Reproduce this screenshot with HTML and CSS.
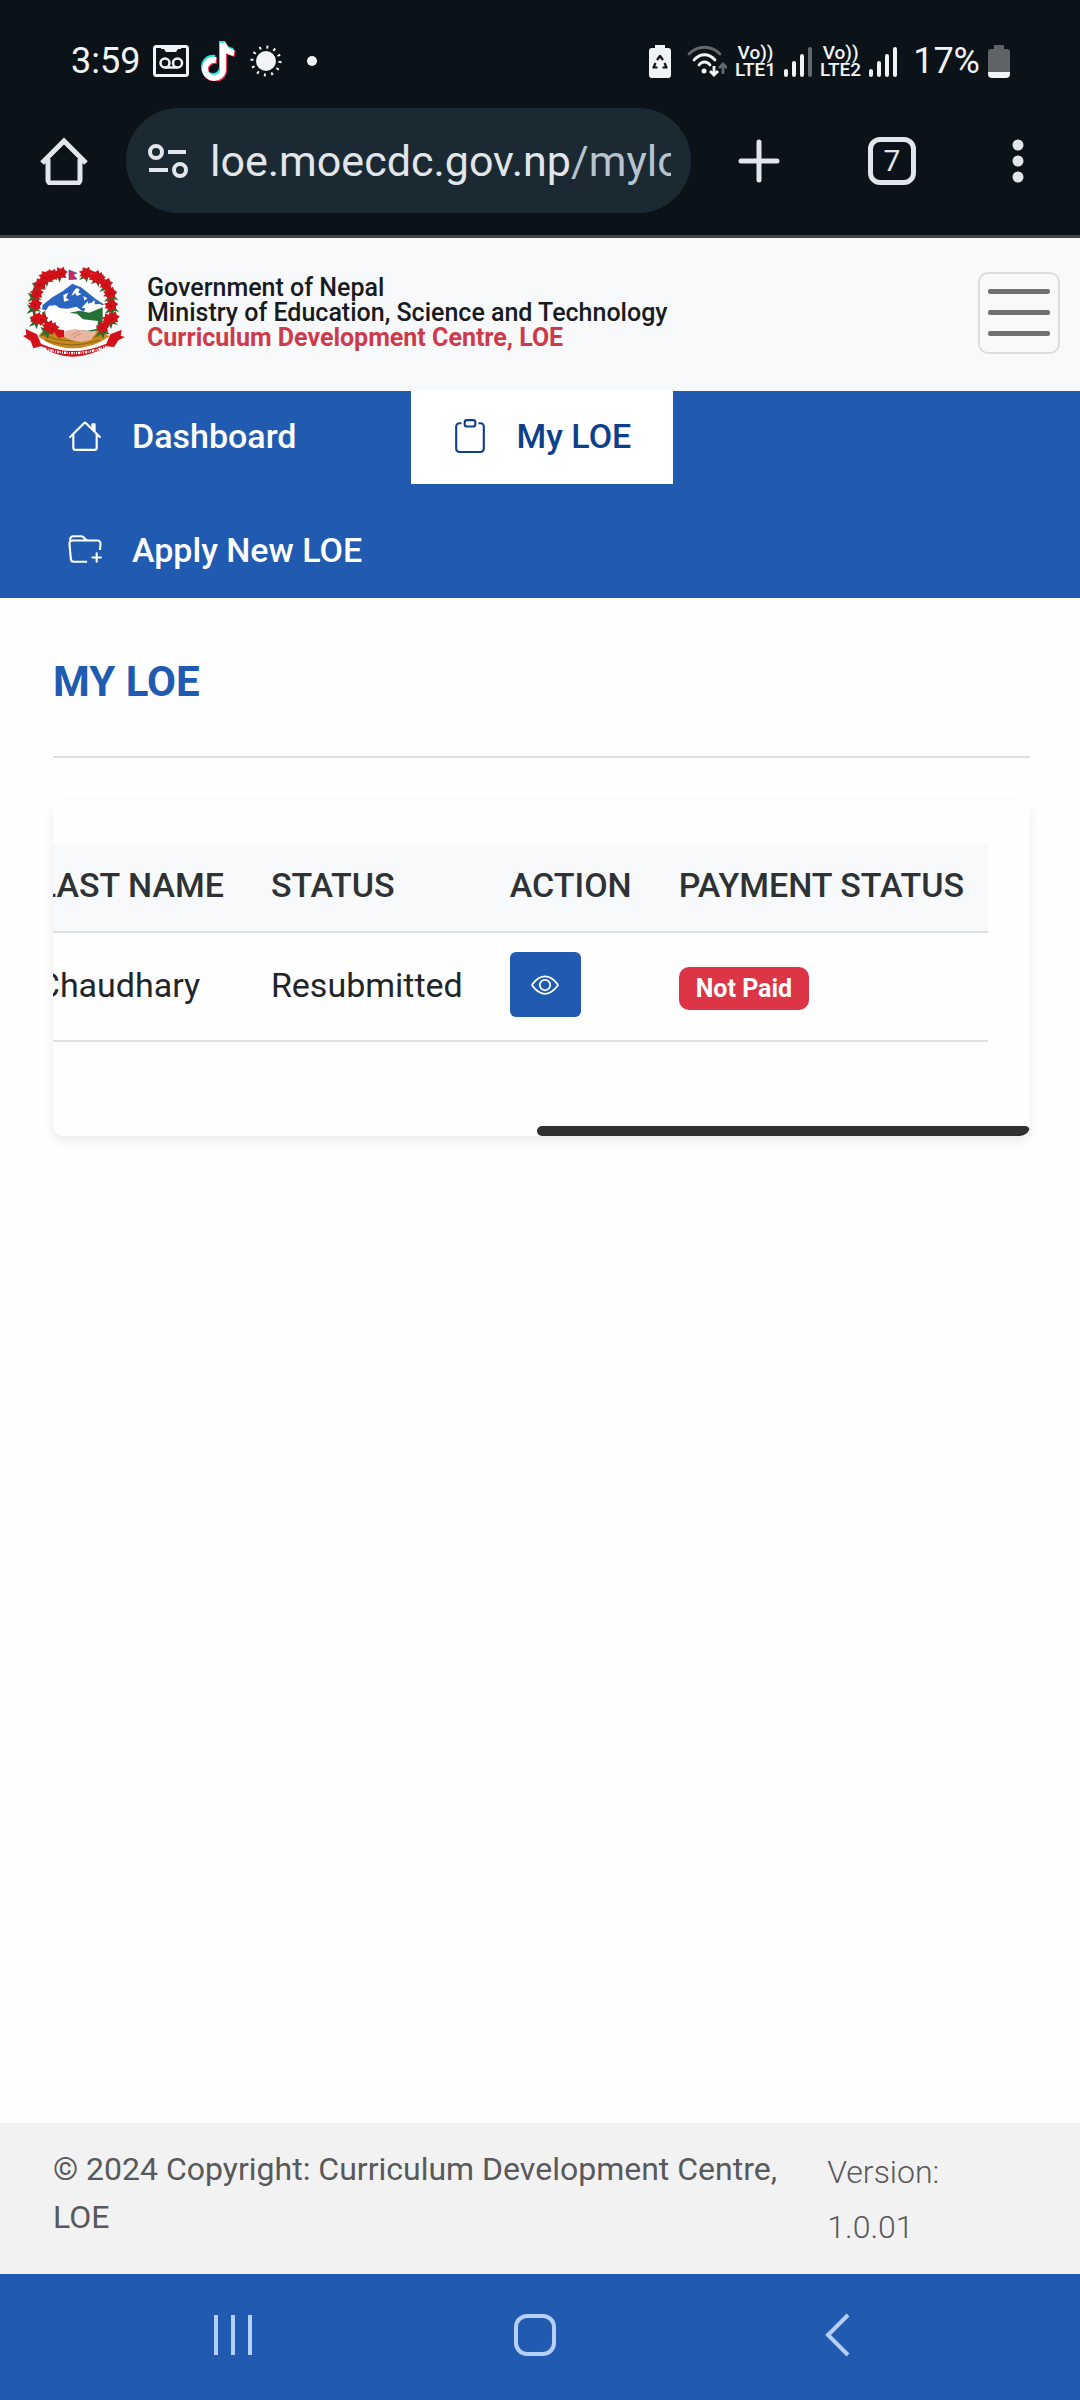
FILE: index.html
```
<!DOCTYPE html>
<html lang="en">
<head>
<meta charset="utf-8">
<meta name="viewport" content="width=device-width, initial-scale=1">
<title>My LOE</title>
<link rel="stylesheet" href="styles.css">
</head>
<body>
<div class="system">
  <div class="status">
    <div class="status-group">
      <span class="clock">3:59</span>
      <svg class="cassette" width="36" height="32" viewBox="0 0 36 32"><rect x="1.500" y="1.500" width="33" height="29" rx="2" fill="none" stroke="#f1f3f4" stroke-width="3"/><path d="M8 1h20v3h-3l-2 3H13l-2-3H8z" fill="#f1f3f4"/><g fill="none" stroke="#f1f3f4" stroke-width="2.500"><circle cx="12" cy="18" r="4.500"/><circle cx="24.500" cy="18" r="4.500"/><path d="M12 22.500h12"/></g></svg>
      <svg class="tiktok" width="36" height="40" viewBox="0 0 36 40"><g fill="none" stroke-width="6"><path d="M15 18C8 17 4 22 4 27c0 6 5 9 9 9s9-3 9-9V1c1 6 5 9 11 10" stroke="#25e4dc" transform="translate(-1 -1)"/><path d="M15 18C8 17 4 22 4 27c0 6 5 9 9 9s9-3 9-9V1c1 6 5 9 11 10" stroke="#f5305c" transform="translate(1 2)"/><path d="M15 18C8 17 4 22 4 27c0 6 5 9 9 9s9-3 9-9V1c1 6 5 9 11 10" stroke="#fff" transform="translate(0 1)"/></g></svg>
      <svg class="sun" width="32" height="32" viewBox="0 0 32 32"><circle cx="16" cy="16" r="10" fill="#f1f3f4"/><circle cx="16" cy="16" r="14" fill="none" stroke="#f1f3f4" stroke-width="3" stroke-dasharray="2 5.330"/></svg>
      <svg class="dot" width="10" height="10" viewBox="0 0 10 10"><circle cx="5" cy="5" r="5" fill="#f1f3f4"/></svg>
    </div>
    <div class="status-group status-right">
      <svg class="saver" width="22" height="33" viewBox="0 0 22 33"><path d="M6 0h10v3h3a3 3 0 0 1 3 3v24a3 3 0 0 1-3 3H3a3 3 0 0 1-3-3V6a3 3 0 0 1 3-3h3z" fill="#f1f3f4"/><path d="M8 15l3-4 3 4M15.500 18l2 4.500h-4M8.500 22.500h-4l2-4.500" fill="none" stroke="#0c1318" stroke-width="2.200" stroke-linejoin="round"/></svg>
      <svg width="40" height="32" viewBox="0 0 40 32"><g fill="none" stroke="#f1f3f4" stroke-width="2.800" stroke-linecap="round"><path d="M2 9C11 0 24 0 33 9" stroke="#62686c"/><path d="M7 15c6-7 15-7 21 0M12 20c3-4 8-4 11 0"/><path d="M27 21v9m-4-4 4 4 4-4" stroke-linecap="butt"/><path d="M36 29V19m-4 4 4-4 4 4" stroke="#62686c" stroke-linecap="butt"/></g><circle cx="17" cy="26" r="2.500" fill="#f1f3f4"/></svg>
      <span class="volte">Vo))<br>LTE1</span>
      <svg width="28" height="31" viewBox="0 0 28 31"><g stroke="#f1f3f4" stroke-width="4" stroke-linecap="round"><path d="M2 25v4M10 17v12M18 10v19"/><path d="M26 3v26" stroke="#62686c"/></g></svg>
      <span class="volte">Vo))<br>LTE2</span>
      <svg width="28" height="31" viewBox="0 0 28 31"><path d="M2 25v4M10 17v12M18 10v19M26 3v26" stroke="#f1f3f4" stroke-width="4" stroke-linecap="round"/></svg>
      <span class="percent">17%</span>
      <svg width="22" height="33" viewBox="0 0 22 33"><path d="M6 0h10v4h3a3 3 0 0 1 3 3v20H0V7a3 3 0 0 1 3-3h3z" fill="#5f6366"/><path d="M0 27h22v2a4 4 0 0 1-4 4H4a4 4 0 0 1-4-4z" fill="#f1f3f4"/></svg>
    </div>
  </div>
  <div class="browser">
    <button class="tool" aria-label="Home"><svg width="48" height="48" viewBox="0 0 48 48"><path d="M2 26 24 4l22 22M8 22v21a3 3 0 0 0 3 3h26a3 3 0 0 0 3-3V22" fill="none" stroke="#e2e6ea" stroke-width="5"/></svg></button>
    <button class="address" aria-label="Address">
      <svg width="40" height="34" viewBox="0 0 40 34"><g fill="none" stroke="#e2e6ea" stroke-width="4"><circle cx="8" cy="8" r="6"/><circle cx="32" cy="26" r="6"/><path d="M20 8h18M1 26h19"/></g></svg>
      <span class="url">loe.moecdc.gov.np<span class="path">/myloe</span></span>
    </button>
    <div class="tools">
      <button class="tool" aria-label="New tab"><svg width="42" height="44" viewBox="0 0 42 44"><path d="M21 3v38M3 22h36" stroke="#e2e6ea" stroke-width="5" stroke-linecap="round"/></svg></button>
      <button class="tool tabs" aria-label="Tabs">7</button>
      <button class="tool" aria-label="Menu"><svg width="12" height="44" viewBox="0 0 12 44"><g fill="#e2e6ea"><circle cx="6" cy="6" r="5.500"/><circle cx="6" cy="22" r="5.500"/><circle cx="6" cy="38" r="5.500"/></g></svg></button>
    </div>
  </div>
</div>

<header class="masthead">
  <svg class="emblem" width="120" height="105" viewBox="0 0 360 315">
    <defs>
      <g id="leaf"><path d="M-20-10l14 4 2-16 7 15 17-5-11 12 14 12-16-2-5 16-6-14-17 6 10-13z" fill="#2d6b2c"/></g>
      <g id="bloom"><path d="M-20-7l10-3 1-10 10 4 9-6 3 10 9 5-7 8 2 10-11-1-8 7-6-9-11-1 6-8z" fill="#d3111b"/><circle r="3" fill="#9e0c14"/></g>
    </defs>
    <ellipse cx="172" cy="162" rx="104" ry="118" fill="#fff"/>
    <path d="M83 135 112 112l33-20 27-21 16 7 9 3 22 17 24 20 26 16-28 2-18-8-18 28-20-16-28 6-26-2-28 10-22-6z" fill="#2a65c2"/>
    <path d="M184 84l10 4-4 10 10 4-14 6-5-8-12 8 7-14zM145 105l15-7-7 16 10 6-16 5zM205 108l12 7-9 7z" fill="#fff"/>
    <path d="M200 143l18-19 3 11 18-15 0 13 20-1-15 13-15-3-9 9-11-6z" fill="#fff"/>
    <path d="M82 157l20-10 34 3 22 10 35-8 30 6 40-16v40l-9 27-40 10-60-20-50 6-20-20z" fill="#247035"/>
    <path d="M90 155l12-18 20-1 12 8 20 14 32 3 18 17 45 5-2 23-29 6-66-5-52-13z" fill="#fff"/>
    <path d="M86 209q86 38 166 0l32 20q-50 36-110 36T70 229z" fill="#c58b20"/>
    <path d="M86 226q86 34 170 0M90 240q82 30 164 0" fill="none" stroke="#8c6111" stroke-width="3"/>
    <path d="M125 207l22 4 1 20-18 2-12-14z" fill="#d3111b"/>
    <path d="M148 213l30-5 36 4 30 5-15 22-30 7-30-5-21-10z" fill="#eab5a0"/>
    <path d="M170 225l24-12M175 232l24-12" stroke="#b77766" stroke-width="2"/>
    <g><use href="#leaf" x="132" y="42"/><use href="#leaf" x="94" y="55"/><use href="#leaf" x="70" y="78"/><use href="#leaf" x="58" y="108"/><use href="#leaf" x="56" y="143"/><use href="#leaf" x="63" y="182"/><use href="#leaf" x="96" y="211"/><use href="#leaf" x="213" y="42"/><use href="#leaf" x="248" y="55"/><use href="#leaf" x="274" y="78"/><use href="#leaf" x="288" y="108"/><use href="#leaf" x="290" y="143"/><use href="#leaf" x="286" y="182"/><use href="#leaf" x="262" y="211"/></g>
    <g><use href="#bloom" x="136" y="42"/><use href="#bloom" x="110" y="48"/><use href="#bloom" x="90" y="53"/><use href="#bloom" x="75" y="75"/><use href="#bloom" x="64" y="102"/><use href="#bloom" x="60" y="136"/><use href="#bloom" x="64" y="178"/><use href="#bloom" x="78" y="180"/><use href="#bloom" x="100" y="202"/><use href="#bloom" x="111" y="208"/><use href="#bloom" x="212" y="42"/><use href="#bloom" x="240" y="52"/><use href="#bloom" x="250" y="58"/><use href="#bloom" x="272" y="75"/><use href="#bloom" x="284" y="102"/><use href="#bloom" x="287" y="138"/><use href="#bloom" x="280" y="180"/><use href="#bloom" x="292" y="176"/><use href="#bloom" x="262" y="204"/></g>
    <path d="M162 30l24 10-12 3 12 14-24 2z" fill="#d3255a" stroke="#3549a0" stroke-width="2"/>
    <path d="M24 228l10-4-2-17 34 16 12 28q94 44 196 0l12-28 34-14-3 18 13 4-20 10-13 20-20-2q-108 62-200 0l-22 6-8-22z" fill="#d3111b"/>
    <path d="M80 262q92 36 194-2" fill="none" stroke="#fff" stroke-width="7" stroke-dasharray="3 3 7 2 2 4"/>
  </svg>
  <div class="titles">
    <div>Government of Nepal</div>
    <div>Ministry of Education, Science and Technology</div>
    <div class="centre">Curriculum Development Centre, LOE</div>
  </div>
  <button class="toggler" aria-label="Toggle navigation"><span class="bar"></span><span class="bar"></span><span class="bar"></span></button>
</header>

<nav class="menu">
  <a class="item" href="#"><svg width="34" height="34" viewBox="0 0 16 16" fill="currentColor"><path d="M2 13.500V7h1v6.500a.5.500 0 0 0 .5.500h9a.5.500 0 0 0 .5-.5V7h1v6.500a1.500 1.500 0 0 1-1.500 1.500h-9A1.500 1.500 0 0 1 2 13.500zm11-11V6l-2-2V2.500a.5.500 0 0 1 .5-.5h1a.5.500 0 0 1 .5.500z"/><path d="M7.293 1.500a1 1 0 0 1 1.414 0l6.647 6.646a.5.500 0 0 1-.708.708L8 2.207 1.354 8.854a.5.500 0 1 1-.708-.708L7.293 1.500z"/></svg>Dashboard</a>
  <a class="item active" href="#" aria-current="page"><svg width="34" height="34" viewBox="0 0 16 16" fill="currentColor"><path d="M4 1.500H3a2 2 0 0 0-2 2V14a2 2 0 0 0 2 2h10a2 2 0 0 0 2-2V3.500a2 2 0 0 0-2-2h-1v1h1a1 1 0 0 1 1 1V14a1 1 0 0 1-1 1H3a1 1 0 0 1-1-1V3.500a1 1 0 0 1 1-1h1v-1z"/><path d="M9.500 1a.5.500 0 0 1 .5.500v1a.5.500 0 0 1-.5.500h-3a.5.500 0 0 1-.5-.5v-1a.5.500 0 0 1 .5-.5h3zm-3-1A1.500 1.500 0 0 0 5 1.500v1A1.500 1.500 0 0 0 6.500 4h3A1.500 1.500 0 0 0 11 2.500v-1A1.500 1.500 0 0 0 9.500 0h-3z"/></svg>My LOE</a>
  <a class="item" href="#"><svg width="34" height="34" viewBox="0 0 16 16" fill="currentColor"><path d="m.5 3 .04.870a1.990 1.990 0 0 0-.342 1.311l.637 7A2 2 0 0 0 2.826 14H9v-1H2.826a1 1 0 0 1-.995-.91l-.637-7A1 1 0 0 1 2.190 4h11.620a1 1 0 0 1 .996 1.090L14.540 8h1.005l.256-2.819A2 2 0 0 0 13.810 3H9.828a2 2 0 0 1-1.414-.586l-.828-.828A2 2 0 0 0 6.172 1H2.500a2 2 0 0 0-2 2m5.672-1a1 1 0 0 1 .707.293L7.586 3H2.190q-.362.002-.683.120L1.500 2.980a1 1 0 0 1 1-.98z"/><path d="M13.500 9a.5.500 0 0 1 .5.500V11h1.500a.5.500 0 1 1 0 1H14v1.500a.5.500 0 1 1-1 0V12h-1.500a.5.500 0 0 1 0-1H13V9.500a.5.500 0 0 1 .5-.5"/></svg>Apply New LOE</a>
</nav>

<main class="content">
  <h1 class="heading">MY LOE</h1>
  <section class="card">
    <table class="records">
      <thead><tr><th scope="col">LAST NAME</th><th scope="col">STATUS</th><th scope="col">ACTION</th><th scope="col">PAYMENT STATUS</th></tr></thead>
      <tbody><tr>
        <td>Chaudhary</td>
        <td>Resubmitted</td>
        <td><button class="view" aria-label="View"><svg width="28" height="28" viewBox="0 0 16 16" fill="currentColor"><path d="M16 8s-3-5.500-8-5.500S0 8 0 8s3 5.500 8 5.500S16 8 16 8zM1.173 8a13.133 13.133 0 0 1 1.660-2.043C4.120 4.668 5.880 3.500 8 3.500c2.120 0 3.879 1.168 5.168 2.457A13.133 13.133 0 0 1 14.828 8c-.058.087-.122.183-.195.288-.335.480-.83 1.120-1.465 1.755C11.879 11.332 10.119 12.500 8 12.500c-2.120 0-3.879-1.168-5.168-2.457A13.134 13.134 0 0 1 1.172 8z"/><path d="M8 5.500a2.500 2.500 0 1 0 0 5 2.500 2.500 0 0 0 0-5zM4.500 8a3.500 3.500 0 1 1 7 0 3.500 3.500 0 0 1-7 0z"/></svg></button></td>
        <td><span class="badge">Not Paid</span></td>
      </tr></tbody>
    </table>
    <div class="scroll-thumb"></div>
  </section>
</main>

<footer class="footer">
  <div class="copyright">© 2024 Copyright: Curriculum Development Centre, LOE</div>
  <div class="version">Version: 1.0.01</div>
</footer>

<div class="softkeys">
  <button class="tool" aria-label="Recent apps"><svg width="38" height="44" viewBox="0 0 38 44"><path d="M2 2v40M19 2v40M36 2v40" stroke="#b4cffa" stroke-width="4"/></svg></button>
  <button class="tool" aria-label="Home screen"><svg width="44" height="44" viewBox="0 0 44 44"><rect x="3" y="3" width="38" height="38" rx="11" fill="none" stroke="#b4cffa" stroke-width="4"/></svg></button>
  <button class="tool back" aria-label="Back"><svg width="26" height="44" viewBox="0 0 26 44"><path d="M24 2 4 22l20 20" fill="none" stroke="#b4cffa" stroke-width="4"/></svg></button>
</div>
</body>
</html>
```
FILE: styles.css
```
* { box-sizing: border-box; }

body {
  margin: 0;
  min-height: 100vh;
  display: flex;
  flex-direction: column;
  background: #fefefe;
  color: #212529;
  font-family: Roboto, "Liberation Sans", sans-serif;
  font-size: 34px;
}

button {
  margin: 0;
  padding: 0;
  border: 0;
  background: none;
  font-family: inherit;
}

svg { display: block; flex: none; }

/* Phone status bar and browser bar */
.system {
  background: #0c1318;
  border-bottom: 3px solid #42474b;
  color: #f1f3f4;
}

.status {
  display: flex;
  align-items: center;
  justify-content: space-between;
  height: 108px;
  padding: 14px 70px 0 71px;
}

.status-group { display: flex; align-items: center; }
.status-right { gap: 8px; }
.clock, .percent { font-size: 36px; }
.cassette { margin-left: 13px; }
.tiktok { margin-left: 12px; }
.sun { margin-left: 13px; }
.dot { margin-left: 25px; }
.saver { margin-right: 8px; }
.percent { margin-left: 8px; }

.volte {
  font-size: 19px;
  line-height: 17px;
  font-weight: 500;
  text-align: center;
}

.browser {
  display: flex;
  align-items: center;
  gap: 38px;
  height: 127px;
  padding: 0 56px 22px 40px;
}

.address {
  display: flex;
  align-items: center;
  gap: 22px;
  flex: 1;
  min-width: 0;
  height: 105px;
  padding: 0 20px 0 22px;
  border-radius: 53px;
  background: #1b2932;
  color: #e2e6ea;
  font-size: 43px;
}

.url { flex: 1; overflow: hidden; white-space: nowrap; text-align: left; }
.path { color: #b6c3cc; }

.tools {
  display: flex;
  align-items: center;
  justify-content: space-between;
  width: 286px;
  margin-left: 9px;
}

.tabs {
  width: 48px;
  height: 48px;
  margin-right: 8px;
  border: 5px solid #e2e6ea;
  border-radius: 12px;
  color: #e2e6ea;
  font-size: 30px;
  line-height: 36px;
}

/* Site header */
.masthead {
  display: flex;
  align-items: center;
  min-height: 153px;
  padding: 0 20px 4px 15px;
  background: #f8f9fa;
}

.titles {
  flex: 1;
  margin-left: 12px;
  font-size: 25px;
  line-height: 25px;
  font-weight: 500;
  color: #181b1e;
}

.centre { color: #cf3a4a; font-weight: 700; }

.toggler {
  display: flex;
  flex-direction: column;
  align-items: center;
  justify-content: center;
  gap: 16px;
  width: 82px;
  height: 82px;
  border: 2px solid #dcdddf;
  border-radius: 10px;
}

.bar { width: 62px; height: 5px; border-radius: 2px; background: #707173; }

.menu {
  display: flex;
  flex-wrap: wrap;
  gap: 21px 72px;
  padding: 0 26px;
  background: #215bb1;
}

.item {
  display: flex;
  align-items: center;
  gap: 30px;
  height: 93px;
  padding: 0 42px 4px;
  color: #fff;
  font-weight: 500;
  text-decoration: none;
}

.active { background: #fff; color: #0d3f8a; }

/* Page content */
.content { flex: 1; padding: 0 50px 40px 53px; }

.heading {
  margin: 0 0 42px;
  padding: 59px 0 50px;
  border-bottom: 2px solid #dee0e2;
  color: #215bb1;
  font-size: 42px;
  line-height: 49px;
  font-weight: 700;
}

.card {
  position: relative;
  display: flex;
  justify-content: flex-end;
  padding: 43px 42px 94px;
  border-radius: 10px;
  background: #fefefe;
  box-shadow: 0 5px 11px rgba(0, 0, 0, 0.08);
  overflow: hidden;
}

.records {
  flex: none;
  min-width: 100%;
  border-collapse: collapse;
  white-space: nowrap;
  text-align: left;
}

.records th, .records td {
  padding: 0 24px 4px 23px;
  border-bottom: 2px solid #dee0e2;
}

.records th {
  height: 89px;
  background: #f8f9fa;
  color: #2f3234;
  font-weight: 500;
}

.records td { height: 109px; }

.view {
  display: flex;
  align-items: center;
  justify-content: center;
  width: 71px;
  height: 65px;
  border-radius: 6px;
  background: #215bb1;
  color: #fff;
}

.badge {
  display: inline-block;
  margin-top: 8px;
  padding: 8px 17px;
  border-radius: 10px;
  background: #dc3545;
  color: #fff;
  font-size: 25px;
  line-height: 27px;
  font-weight: 700;
  vertical-align: middle;
}

.scroll-thumb {
  position: absolute;
  right: 0;
  bottom: 0;
  width: 493px;
  height: 10px;
  border-radius: 5px;
  background: #303030;
}

.footer {
  display: grid;
  grid-template-columns: 3fr 1fr;
  min-height: 151px;
  padding: 22px 0 15px 53px;
  background: #f2f2f2;
  color: #58595b;
  font-size: 32px;
}

.copyright { line-height: 48px; padding-right: 40px; }
.version { line-height: 55px; font-weight: 300; padding: 0 90px 0 4px; }

.softkeys {
  display: flex;
  align-items: center;
  justify-content: space-between;
  min-height: 126px;
  padding: 0 230px 4px 214px;
  background: #215bb1;
}

.back { margin-left: 6px; }
```
